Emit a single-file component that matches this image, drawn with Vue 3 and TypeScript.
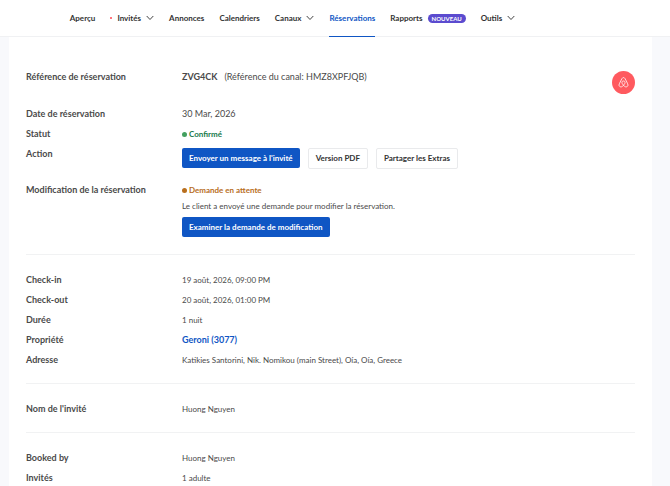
<script setup lang="ts">
interface NavItem {
  label: string
  menu?: boolean
  alert?: boolean
  badge?: string
  active?: boolean
}

interface Detail {
  label: string
  value: string
  link?: boolean
}

const navItems: NavItem[] = [
  { label: 'Aperçu' },
  { label: 'Invités', menu: true, alert: true },
  { label: 'Annonces' },
  { label: 'Calendriers' },
  { label: 'Canaux', menu: true },
  { label: 'Réservations', active: true },
  { label: 'Rapports', badge: 'NOUVEAU' },
  { label: 'Outils', menu: true },
]

const sections: Detail[][] = [
  [
    { label: 'Check-in', value: '19 août, 2026, 09:00 PM' },
    { label: 'Check-out', value: '20 août, 2026, 01:00 PM' },
    { label: 'Durée', value: '1 nuit' },
    { label: 'Propriété', value: 'Geroni (3077)', link: true },
    { label: 'Adresse', value: 'Katikies Santorini, Nik. Nomikou (main Street), Oía, Oía, Greece' },
  ],
  [{ label: "Nom de l'invité", value: 'Huong Nguyen' }],
  [
    { label: 'Booked by', value: 'Huong Nguyen' },
    { label: 'Invités', value: '1 adulte' },
  ],
]
</script>

<template>
  <div class="page">
    <header class="topbar">
      <nav class="nav">
        <a
          v-for="item in navItems"
          :key="item.label"
          href="#"
          class="nav-item"
          :class="{ active: item.active }"
        >
          <span v-if="item.alert" class="alert-dot"></span>
          <span>{{ item.label }}</span>
          <svg v-if="item.menu" class="chevron" viewBox="0 0 8 6" aria-hidden="true">
            <path d="M0.7 1 L4 4.5 L7.3 1" />
          </svg>
          <span v-if="item.badge" class="badge">{{ item.badge }}</span>
        </a>
      </nav>
    </header>

    <main class="card">
      <section class="section">
        <dl class="details">
          <div class="row reference">
            <dt>Référence de réservation</dt>
            <dd class="large">
              <strong>ZVG4CK</strong>
              <span>(Référence du canal: HMZ8XPFJQB)</span>
              <span class="channel">
                <svg viewBox="0 0 24 24" role="img" aria-label="Airbnb">
                  <path
                    d="M12 18.2 C9.8 15.5 8.6 13.6 8.6 11.9 C8.6 9.9 10 8.7 12 8.7 C14 8.7 15.4 9.9 15.4 11.9 C15.4 13.6 14.2 15.5 12 18.2 C10.2 20.4 8.4 21.6 6.5 21.6 C4 21.6 2.2 19.8 2.2 17.5 C2.2 16.6 2.5 15.8 3 14.7 C4.9 10.6 7.2 6 8.9 3.2 C9.8 1.8 10.7 1.2 12 1.2 C13.3 1.2 14.2 1.8 15.1 3.2 C16.8 6 19.1 10.6 21 14.7 C21.5 15.8 21.8 16.6 21.8 17.5 C21.8 19.8 20 21.6 17.5 21.6 C15.6 21.6 13.8 20.4 12 18.2 Z"
                  />
                </svg>
              </span>
            </dd>
          </div>
          <div class="row">
            <dt>Date de réservation</dt>
            <dd class="large">30 Mar, 2026</dd>
          </div>
          <div class="row">
            <dt>Statut</dt>
            <dd class="status confirmed">Confirmé</dd>
          </div>
          <div class="row actions-row">
            <dt>Action</dt>
            <dd class="actions">
              <button type="button" class="btn primary">Envoyer un message à l'invité</button>
              <button type="button" class="btn outline">Version PDF</button>
              <button type="button" class="btn outline">Partager les Extras</button>
            </dd>
          </div>
          <div class="row">
            <dt>Modification de la réservation</dt>
            <dd>
              <div class="status pending">Demande en attente</div>
              <p class="note">Le client a envoyé une demande pour modifier la réservation.</p>
              <button type="button" class="btn primary">Examiner la demande de modification</button>
            </dd>
          </div>
        </dl>
      </section>

      <section v-for="(rows, index) in sections" :key="index" class="section">
        <dl class="details">
          <div v-for="row in rows" :key="row.label" class="row">
            <dt>{{ row.label }}</dt>
            <dd>
              <a v-if="row.link" href="#" class="property">{{ row.value }}</a>
              <template v-else>{{ row.value }}</template>
            </dd>
          </div>
        </dl>
      </section>
    </main>
  </div>
</template>

<style>
body {
  margin: 0;
  background: #f8f9fc;
}
</style>

<style scoped>
.page {
  font-family: Lato, "Liberation Sans", sans-serif;
  font-size: 8px;
  line-height: 20px;
  color: #4a4a4a;
}

.topbar {
  background: #fff;
  border-bottom: 1px solid #f0f1f3;
}

.nav {
  display: flex;
  justify-content: center;
  gap: 15px;
  height: 36px;
  padding-right: 85px;
}

.nav-item {
  display: flex;
  align-items: center;
  gap: 5px;
  margin-bottom: -1px;
  border-bottom: 1px solid transparent;
  color: #333;
  font-weight: 700;
  text-decoration: none;
  white-space: nowrap;
}

.nav-item.active {
  color: #0f56c4;
  border-color: #0f56c4;
}

.alert-dot {
  width: 2px;
  height: 2px;
  border-radius: 1px;
  background: #ff4a55;
}

.chevron {
  width: 8px;
  height: 6px;
  fill: none;
  stroke: #444;
  stroke-width: 1;
}

.badge {
  padding: 0 4px;
  border-radius: 5px;
  background: #5b4bcf;
  color: #fff;
  font-size: 6px;
  line-height: 9px;
}

.card {
  margin: 0 18px 0 9px;
  padding: 15px 17px 0;
  background: #fff;
}

.section {
  padding: 15px 0 13px;
}

.section + .section {
  border-top: 1px solid #f1f2f3;
}

.section:first-child {
  padding-bottom: 17px;
}

.details {
  margin: 0;
}

.row {
  display: grid;
  grid-template-columns: 156px 1fr;
}

.reference {
  min-height: 37px;
}

dt {
  font-size: 9px;
  font-weight: 700;
}

dd {
  margin: 0;
}

.large {
  font-size: 9px;
}

.reference dd {
  display: flex;
  align-items: flex-start;
  gap: 7px;
}

.channel {
  display: flex;
  align-items: center;
  justify-content: center;
  width: 23px;
  height: 23px;
  margin: 4px 0 0 auto;
  border-radius: 50%;
  background: #ff5a5f;
}

.channel svg {
  width: 11px;
  height: 11px;
  fill: none;
  stroke: #fff;
  stroke-width: 1.7;
}

.status {
  display: flex;
  align-items: center;
  gap: 2px;
  font-weight: 700;
}

.status::before {
  width: 5px;
  height: 5px;
  border-radius: 50%;
  background: currentColor;
  content: "";
}

.confirmed {
  color: #16794c;
}

.confirmed::before {
  background: #43a05f;
}

.pending {
  color: #b86e1d;
}

.actions-row {
  min-height: 36px;
}

.actions {
  display: flex;
  align-items: flex-start;
  gap: 8px;
  padding-top: 4px;
}

.btn {
  padding: 0 7px;
  border: 0;
  border-radius: 2px;
  font: inherit;
  font-weight: 700;
  white-space: nowrap;
}

.primary {
  background: #0f56c4;
  color: #fff;
}

.outline {
  border: 1px solid #e9eaec;
  background: #fff;
  color: #333;
  line-height: 19px;
}

.note {
  margin: 0;
  line-height: 12px;
  padding-bottom: 5px;
}

.property {
  display: block;
  color: #0f56c4;
  font-size: 9px;
  font-weight: 700;
  text-decoration: none;
}
</style>
